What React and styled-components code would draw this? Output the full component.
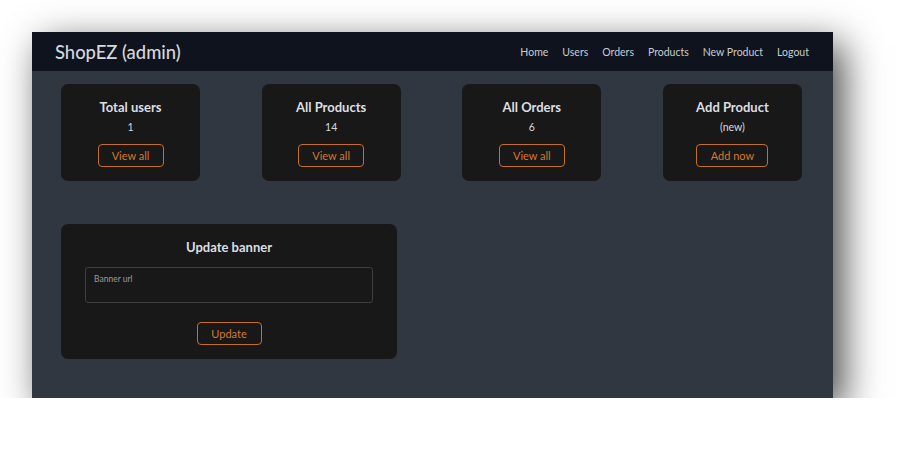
import React from 'react';
import styled, { createGlobalStyle } from 'styled-components';

const GlobalStyle = createGlobalStyle`
  html, body {
    margin: 0;
    padding: 0;
    background: #ffffff;
    font-family: Lato, 'Noto Sans', sans-serif;
  }
`;

const Frame = styled.div`
  margin: 32px 0 0 32px;
  width: 801px;
  height: 366px;
  background: #313740;
  box-shadow: 10px 12px 36px rgba(0, 0, 0, 0.72);
  display: flex;
  flex-direction: column;
`;

const Navbar = styled.nav`
  height: 39px;
  background: #0e131d;
  display: flex;
  align-items: center;
  justify-content: space-between;
  padding: 0 24px 0 23px;
`;

const Brand = styled.h3`
  margin: 0;
  color: #d4d7dc;
  font-size: 18.4px;
  font-weight: 500;
`;

const NavLinks = styled.ul`
  margin: 0;
  padding: 0;
  list-style: none;
  display: flex;
  gap: 14px;
`;

const NavLink = styled.li`
  color: #c9ccd1;
  font-size: 10.5px;
`;

const CardRow = styled.div`
  display: flex;
  justify-content: space-between;
  margin-top: 13px;
  padding: 0 31px 0 29px;
`;

const Card = styled.div`
  width: ${(p) => p.$width || 139}px;
  height: ${(p) => p.$height || 97}px;
  background: #181818;
  border-radius: 7px;
  box-sizing: border-box;
  padding-top: ${(p) => p.$pad || 14}px;
  display: flex;
  flex-direction: column;
  align-items: center;
`;

const Title = styled.h5`
  margin: 0;
  color: #dcdfe3;
  font-size: 13px;
  font-weight: 700;
  line-height: 18px;
`;

const Value = styled.p`
  margin: 4px 0 0;
  color: #d6d8dc;
  font-size: 10.5px;
  line-height: 14px;
`;

const OutlineButton = styled.button`
  margin-top: ${(p) => p.$top || 10}px;
  height: 23px;
  padding: 0;
  width: ${(p) => p.$width}px;
  background: transparent;
  border: 1px solid #c66f22;
  border-radius: 4px;
  color: #d57a2c;
  font-family: inherit;
  font-size: 11px;
`;

const BannerSection = styled.div`
  margin: 43px 0 0 29px;
`;

const BannerInput = styled.textarea`
  margin-top: 11px;
  width: 288px;
  height: 36px;
  box-sizing: border-box;
  background: #181818;
  border: 1px solid #3f3f3f;
  border-radius: 3px;
  padding: 6px 8px;
  resize: none;
  font-family: inherit;
  font-size: 8.5px;
  color: #c0c0c0;
  &::placeholder {
    color: #9a9a9a;
  }
`;

const stats = [
  { title: 'Total users', value: '1', action: 'View all', width: 66 },
  { title: 'All Products', value: '14', action: 'View all', width: 66 },
  { title: 'All Orders', value: '6', action: 'View all', width: 66 },
  { title: 'Add Product', value: '(new)', action: 'Add now', width: 72 },
];

const links = ['Home', 'Users', 'Orders', 'Products', 'New Product', 'Logout'];

export default function App() {
  return (
    <>
      <GlobalStyle />
      <Frame>
        <Navbar>
          <Brand>ShopEZ (admin)</Brand>
          <NavLinks>
            {links.map((l) => (
              <NavLink key={l}>{l}</NavLink>
            ))}
          </NavLinks>
        </Navbar>

        <CardRow>
          {stats.map((s) => (
            <Card key={s.title}>
              <Title>{s.title}</Title>
              <Value>{s.value}</Value>
              <OutlineButton $width={s.width}>{s.action}</OutlineButton>
            </Card>
          ))}
        </CardRow>

        <BannerSection>
          <Card $width={336} $height={135} $pad={14}>
            <Title>Update banner</Title>
            <BannerInput placeholder="Banner url" />
            <OutlineButton $width={65} $top={19}>Update</OutlineButton>
          </Card>
        </BannerSection>
      </Frame>
    </>
  );
}
